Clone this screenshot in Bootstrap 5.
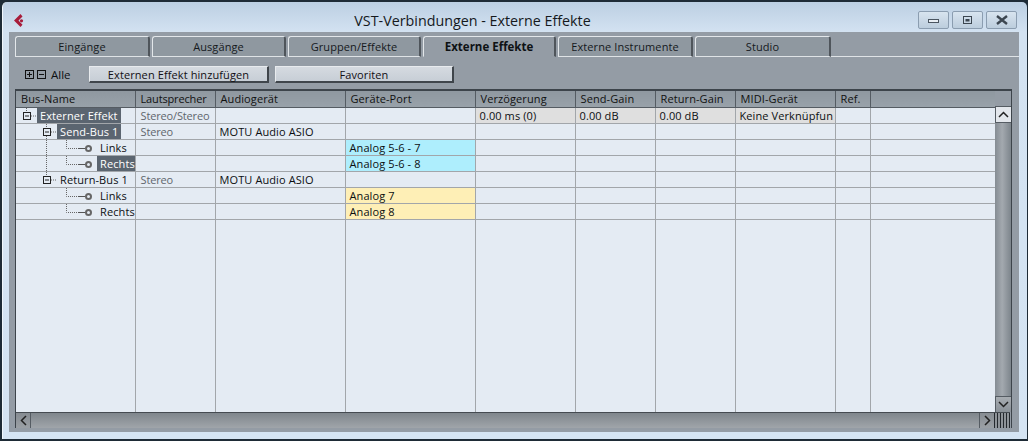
<!DOCTYPE html>
<html lang="de">
<head>
<meta charset="utf-8">
<title>VST-Verbindungen - Externe Effekte</title>
<link href="https://cdn.jsdelivr.net/npm/bootstrap@5.3.0/dist/css/bootstrap.min.css" rel="stylesheet">
<style>
html,body{margin:0;height:441px;overflow:hidden;background:#1e2b36}
body{font-family:"Open Sans","Noto Sans",sans-serif;font-size:11px;color:#0c0f12}
.win{width:1028px;height:441px;padding:2px 1px 2px 2px;}
.win-in{height:100%;background:linear-gradient(180deg,#bccfe2 0,#d3e2f1 30px,#d5e4f3 100%);border-radius:5px 5px 0 0;border-left:1px solid #f0f6fb;padding:0 8px 6px 6px}
.titlebar{height:30px;position:relative;flex:none}
.ttl{width:100%;text-align:center;font-size:14.3px;color:#15191d;padding-top:9px;padding-right:83px;line-height:20px}
.logo{position:absolute;left:4px;top:11px}
.wbtns{position:absolute;right:2px;top:9px;gap:3px}
.wbtn{width:31px;height:18px;border:1px solid #8b9db0;border-radius:2px;background:linear-gradient(180deg,#d8e4ef,#bccddd);align-items:center;justify-content:center}
.panel{background:#949ca5;height:400px;padding:4px 0 4px 6px}
.tabs{height:21px;flex:none}
.tabx{height:21px;background:#8f98a0;border:1px solid #e3e7ea;border-right:2px solid #4f555b;border-radius:3px 3px 0 0;border-bottom:1px solid #dfe3e6;font-size:11px;line-height:19px;text-align:center;margin-right:2px;color:#15191d;letter-spacing:.1px}
.tabx.on{background:#949ca5;border-bottom-color:#949ca5;font-weight:700;font-size:11.5px;color:#0e1114;letter-spacing:0}
.tabfill{flex:1;border-bottom:1px solid #dfe3e6;height:21px}
.bar{height:33px;flex:none;padding-top:9px}
.plusbox{width:9px;height:9px;border:1px solid #111;position:relative;margin-right:3px;background:#949ca5;flex:none}
.plusbox::before{content:"";position:absolute;left:1px;right:1px;top:3px;height:1px;background:#111}
.plusbox.p::after{content:"";position:absolute;top:1px;bottom:1px;left:3px;width:1px;background:#111}
.alle{margin-left:2px;width:38px;font-size:11.5px}
.tbtn{height:17px;background:linear-gradient(180deg,#d5dae0,#c7ced6);border:0;border-right:2px solid #3f454b;border-bottom:2px solid #3f454b;border-left:1px solid #e8ebee;border-top:1px solid #e8ebee;border-radius:0;padding:0;font-size:11px;line-height:13px;color:#120f14;letter-spacing:.1px}
.frame{width:997px;height:339px;border:1px solid #3d444b;border-top:2px solid #3d444b;border-bottom:0;margin-top:-1px;flex:none;background:#949ca5}
.tblw{width:979px;height:321px;overflow:hidden;flex:none}
.table.grid{table-layout:fixed;width:979px;margin:0;border-collapse:collapse;--bs-table-bg:#e4ebf3;--bs-table-color:#0c0f12;--bs-table-border-color:#a2a6aa}
.table.grid>*>*>*{padding:0;font-size:11px;border:0;border-right:1px solid #a2a6aa;border-bottom:1px solid #a2a6aa;line-height:15px;height:16px;background:#e4ebf3;white-space:nowrap;overflow:hidden;box-shadow:none;letter-spacing:.1px;vertical-align:top}
.table.grid>thead>tr>th{height:16px;background:linear-gradient(180deg,#8f98a0,#98a1a9);font-weight:400;padding-left:5px;border-right:1px solid #555c63;border-bottom:1px solid #555c63;line-height:15px;color:#111}
.table.grid>thead>tr>th.tight{letter-spacing:-.15px}
.table.grid>tbody>tr>td.val{padding-left:4px}
.table.grid>tbody>tr>td.mute{color:#5f666d;padding-left:5px;letter-spacing:-.15px}
.table.grid>tbody>tr>td.port{padding-left:4px}
.table.grid>tbody>tr>td.cy{background:#aeeefd}
.table.grid>tbody>tr>td.ye{background:#feefb6}
.table.grid>tbody>tr>td.gy{background:#dfdfdf}
.table.grid>tbody>tr>td.name{position:relative;color:#0c0f12}
.table.grid>tbody>tr.fill>td{height:193px;border-bottom:0}
.tree{position:absolute;left:0;top:0}
.lab{position:absolute;top:0;height:15px;line-height:15px;padding:0 3px}
.lab.sel{background:#5b6570;color:#fff}
.vs{width:16px;height:321px;background:linear-gradient(90deg,#858c93,#a3a9af 45%,#7d858c);flex:none}
.vshead{height:16px;background:#949ca5;border-bottom:1px solid #555c63}
.vbtn{height:16px;background:#e3e7ec;border-bottom:1px solid #555c63;border-left:1px solid #555c63;display:flex;align-items:center;justify-content:center}
.vbtn.dn{background:linear-gradient(180deg,#a8adb2,#8a9198);border-top:1px solid #555c63;border-bottom:0}
.hs{height:16px;width:994px;flex:none;background:linear-gradient(180deg,#7f868c,#a0a5aa);border-top:1px solid #454b51;border-bottom:0}
.hbtn{width:15px;height:100%;display:flex;align-items:center;justify-content:center;flex:none;background:linear-gradient(180deg,#868c92,#9ba0a5)}
.corner{width:16px;background:repeating-linear-gradient(90deg,#24292e 0 1px,#8f9499 1px 3px);flex:none;height:100%}
.edge{height:1px;width:994px;background:linear-gradient(90deg,#3d444b 0,#3d444b 790px,#8b939b 790px)}
</style>
</head>
<body>
<div class="win"><div class="win-in d-flex flex-column">
  <div class="titlebar">
    <svg class="logo" width="14" height="16" viewBox="0 0 14 16"><path d="M7.500 1 1 7.500l6.500 6.500 2-2.200-4-4.300 4-3.900z" fill="#a81c3a"/><circle cx="8.500" cy="7.800" r="1.600" fill="#a81c3a"/></svg>
    <div class="ttl">VST-Verbindungen - Externe Effekte</div>
    <div class="wbtns d-flex">
      <div class="wbtn d-flex"><svg width="13" height="7" viewBox="0 0 13 7"><rect x="1.500" y="2.500" width="10" height="3" fill="#e8eef4" stroke="#4a5560"/></svg></div>
      <div class="wbtn d-flex"><svg width="11" height="9" viewBox="0 0 11 9"><rect x="1.500" y=".5" width="8" height="7" fill="none" stroke="#3c4650"/><rect x="3.500" y="3" width="4" height="2.500" fill="#3c4650"/></svg></div>
      <div class="wbtn d-flex"><svg width="14" height="10" viewBox="0 0 14 10"><path d="M2 1l10 8M12 1 2 9" stroke="#3c4650" stroke-width="2.400" fill="none"/></svg></div>
    </div>
  </div>
  <div class="panel d-flex flex-column">
    <div class="tabs d-flex">
      <div class="tabx" style="width:135px">Eingänge</div>
      <div class="tabx" style="width:134px">Ausgänge</div>
      <div class="tabx" style="width:133px">Gruppen/Effekte</div>
      <div class="tabx on" style="width:133px">Externe Effekte</div>
      <div class="tabx" style="width:135px">Externe Instrumente</div>
      <div class="tabx" style="width:136px;margin-right:0">Studio</div>
      <div class="tabfill"></div>
    </div>
    <div class="bar d-flex align-items-start">
      <div class="d-flex align-items-center" style="padding-left:10px;height:17px">
        <span class="plusbox p"></span><span class="plusbox"></span><span class="alle">Alle</span>
      </div>
      <button class="tbtn" style="width:180px">Externen Effekt hinzufügen</button>
      <button class="tbtn" style="width:179px;margin-left:6px">Favoriten</button>
    </div>
    <div class="frame d-flex flex-column">
      <div class="d-flex">
        <div class="tblw">
          <table class="table grid">
            <colgroup><col style="width:119px"><col style="width:80px"><col style="width:130px"><col style="width:130px"><col style="width:100px"><col style="width:80px"><col style="width:80px"><col style="width:100px"><col style="width:35px"><col style="width:125px"></colgroup>
            <thead><tr><th>Bus-Name</th><th class="tight">Lautsprecher</th><th>Audiogerät</th><th>Geräte-Port</th><th>Verzögerung</th><th>Send-Gain</th><th>Return-Gain</th><th>MIDI-Gerät</th><th>Ref.</th><th></th></tr></thead>
            <tbody>
              <tr><td class="name"><svg class="tree" width="40" height="16"><path d="M10.500 0v4M15 8h5" stroke="#666" stroke-dasharray="1 1" fill="none"/><rect x="7.500" y="4.500" width="7" height="7" fill="#e4ebf3" stroke="#222"/><path d="M9 8h4" stroke="#222"/></svg><span class="lab sel" style="left:21px">Externer Effekt</span></td><td class="mute">Stereo/Stereo</td><td></td><td></td><td class="val gy">0.00 ms (0)</td><td class="val gy">0.00 dB</td><td class="val gy">0.00 dB</td><td class="val gy">Keine Verknüpfun</td><td></td><td></td></tr>
              <tr><td class="name"><svg class="tree" width="50" height="16"><path d="M30.500 0v4M30.500 12v4M35 8h5" stroke="#666" stroke-dasharray="1 1" fill="none"/><rect x="27.500" y="4.500" width="7" height="7" fill="#e4ebf3" stroke="#222"/><path d="M29 8h4" stroke="#222"/></svg><span class="lab sel" style="left:41px">Send-Bus 1</span></td><td class="mute">Stereo</td><td class="val">MOTU Audio ASIO</td><td></td><td></td><td></td><td></td><td></td><td></td><td></td></tr>
              <tr><td class="name"><svg class="tree" width="80" height="16"><path d="M30.500 0v16M50.500 0v8.500h12" stroke="#666" stroke-dasharray="1 1" fill="none"/><path d="M62 8.500h7" stroke="#555"/><circle cx="72.500" cy="8.500" r="2.500" fill="#e4ebf3" stroke="#666" stroke-width="2"/></svg><span class="lab" style="left:81px">Links</span></td><td></td><td></td><td class="port cy">Analog 5-6 - 7</td><td></td><td></td><td></td><td></td><td></td><td></td></tr>
              <tr><td class="name"><svg class="tree" width="80" height="16"><path d="M30.500 0v16M50.500 0v8.500h12" stroke="#666" stroke-dasharray="1 1" fill="none"/><path d="M62 8.500h7" stroke="#555"/><circle cx="72.500" cy="8.500" r="2.500" fill="#e4ebf3" stroke="#666" stroke-width="2"/></svg><span class="lab sel" style="left:81px;right:0">Rechts</span></td><td></td><td></td><td class="port cy">Analog 5-6 - 8</td><td></td><td></td><td></td><td></td><td></td><td></td></tr>
              <tr><td class="name"><svg class="tree" width="50" height="16"><path d="M30.500 0v4M35 8h5" stroke="#666" stroke-dasharray="1 1" fill="none"/><rect x="27.500" y="4.500" width="7" height="7" fill="#e4ebf3" stroke="#222"/><path d="M29 8h4" stroke="#222"/></svg><span class="lab" style="left:41px">Return-Bus 1</span></td><td class="mute">Stereo</td><td class="val">MOTU Audio ASIO</td><td></td><td></td><td></td><td></td><td></td><td></td><td></td></tr>
              <tr><td class="name"><svg class="tree" width="80" height="16"><path d="M50.500 0v8.500h12" stroke="#666" stroke-dasharray="1 1" fill="none"/><path d="M62 8.500h7" stroke="#555"/><circle cx="72.500" cy="8.500" r="2.500" fill="#e4ebf3" stroke="#666" stroke-width="2"/></svg><span class="lab" style="left:81px">Links</span></td><td></td><td></td><td class="port ye">Analog 7</td><td></td><td></td><td></td><td></td><td></td><td></td></tr>
              <tr><td class="name"><svg class="tree" width="80" height="16"><path d="M50.500 0v8.500h12" stroke="#666" stroke-dasharray="1 1" fill="none"/><path d="M62 8.500h7" stroke="#555"/><circle cx="72.500" cy="8.500" r="2.500" fill="#e4ebf3" stroke="#666" stroke-width="2"/></svg><span class="lab" style="left:81px">Rechts</span></td><td></td><td></td><td class="port ye">Analog 8</td><td></td><td></td><td></td><td></td><td></td><td></td></tr>
              <tr class="fill"><td></td><td></td><td></td><td></td><td></td><td></td><td></td><td></td><td></td><td></td></tr>
            </tbody>
          </table>
        </div>
        <div class="vs d-flex flex-column">
          <div class="vshead"></div>
          <div class="vbtn"><svg width="11" height="7" viewBox="0 0 11 7"><path d="M1 6l4.500-4.500L10 6" fill="none" stroke="#222" stroke-width="1.500"/></svg></div>
          <div class="flex-grow-1"></div>
          <div class="vbtn dn"><svg width="11" height="7" viewBox="0 0 11 7"><path d="M1 1l4.500 4.500L10 1" fill="none" stroke="#222" stroke-width="1.500"/></svg></div>
        </div>
      </div>
      <div class="hs d-flex">
        <div class="hbtn" style="border-right:1px solid #555c63"><svg width="7" height="11" viewBox="0 0 7 11"><path d="M6 1 1.500 5.500 6 10" fill="none" stroke="#222" stroke-width="1.500"/></svg></div>
        <div class="flex-grow-1"></div>
        <div class="hbtn" style="border-left:1px solid #555c63"><svg width="7" height="11" viewBox="0 0 7 11"><path d="M1 1l4.500 4.500L1 10" fill="none" stroke="#222" stroke-width="1.500"/></svg></div>
        <div class="corner"></div>
      </div>
      <div class="edge"></div>
    </div>
  </div>
</div></div>
</body>
</html>
